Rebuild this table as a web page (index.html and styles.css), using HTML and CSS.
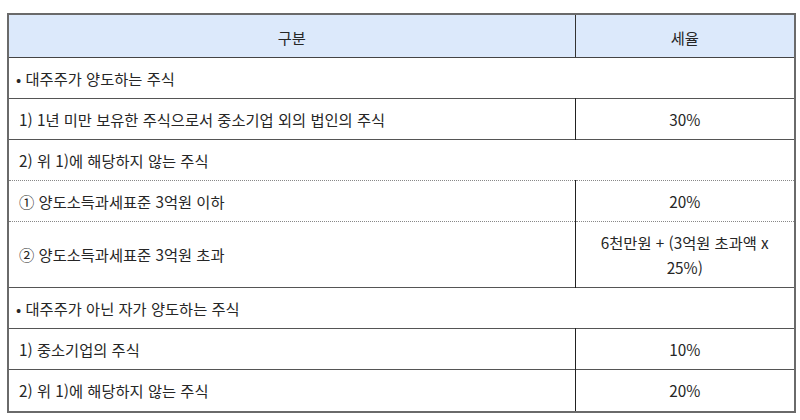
FILE: index.html
```html
<!DOCTYPE html>
<html lang="ko">
<head>
<meta charset="utf-8">
<link rel="stylesheet" href="styles.css">
</head>
<body>
<div class="wrap">
<table class="tax">
  <colgroup><col class="c1"><col class="c2"></colgroup>
  <thead>
    <tr><th>구분</th><th>세율</th></tr>
  </thead>
  <tbody>
    <tr class="sec"><td colspan="2" class="bullet">• 대주주가 양도하는 주식</td></tr>
    <tr><td class="item">1) 1년 미만 보유한 주식으로서 중소기업 외의 법인의 주식</td><td class="rate">30%</td></tr>
    <tr class="dot"><td colspan="2" class="item">2) 위 1)에 해당하지 않는 주식</td></tr>
    <tr class="dot"><td class="item">① 양도소득과세표준 3억원 이하</td><td class="rate">20%</td></tr>
    <tr class="tall"><td class="item">② 양도소득과세표준 3억원 초과</td><td class="rate">6천만원 + (3억원 초과액 x<br>25%)</td></tr>
    <tr class="sec"><td colspan="2" class="bullet">• 대주주가 아닌 자가 양도하는 주식</td></tr>
    <tr><td class="item">1) 중소기업의 주식</td><td class="rate">10%</td></tr>
    <tr class="last"><td class="item">2) 위 1)에 해당하지 않는 주식</td><td class="rate">20%</td></tr>
  </tbody>
</table>
</div>
</body>
</html>
```

FILE: styles.css
```css
html, body {
  margin: 0;
  padding: 0;
  background: #ffffff;
}
.wrap {
  padding: 13px 0 0 7px;
}
.tax {
  width: 787px;
  border-collapse: collapse;
  table-layout: fixed;
  font-family: "Noto Sans CJK KR", "Noto Sans", sans-serif;
  font-size: 15.3px;
  color: #262626;
  border: 2px solid #6a6a6a;
}
.c1 { width: 567px; }
.c2 { width: 220px; }
.tax th {
  background: #dce9fb;
  font-weight: normal;
  height: 40px;
  padding: 2px 0 0 0;
  text-align: center;
  border-bottom: 1px solid #444;
  border-right: 1px solid #333;
  line-height: 25px;
}
.tax td {
  height: 40px;
  padding: 0;
  line-height: 25px;
  border-top: 1px solid #555;
  vertical-align: middle;
}
.tax td.bullet { padding-left: 7px; }
.tax td.item { padding-left: 10px; border-right: 1px solid #222; }
.tax td[colspan].item { border-right: none; }
.tax td.rate { text-align: center; padding-left: 4px; padding-right: 4px; }
.tax tr.dot + tr td { border-top: 1px dotted #888; }
.tax tr.tall td { height: 65px; }
.tax tr.last td { height: 41px; }
```
